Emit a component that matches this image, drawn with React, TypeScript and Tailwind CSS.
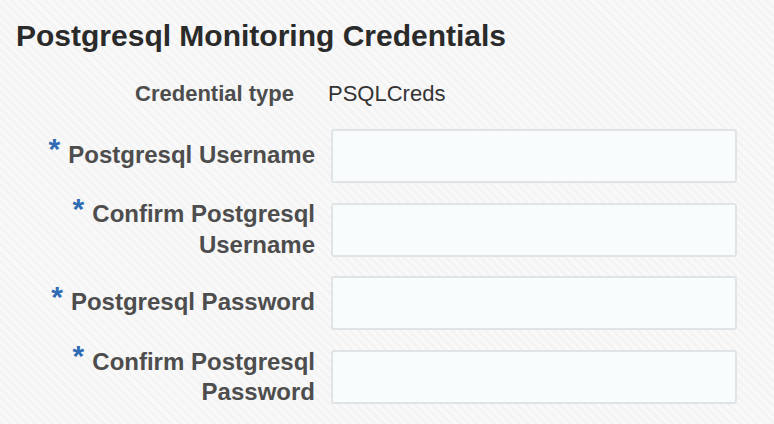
import React from "react";

const Req = () => (
  <span className="relative -top-[7px] mr-[8px] align-middle text-[30px] font-bold leading-none text-[#2f6cb5]">*</span>
);

function Row({ label, required = true }: { label: React.ReactNode; required?: boolean }) {
  return (
    <div className="flex h-[54px] items-center">
      <div className="w-[315px] pl-[20px] text-right text-[24px] font-bold leading-[28.4px] text-[#4d4d4d]">
        {required && <Req />}
        {label}
      </div>
      <div className="ml-[16px] h-[54px] w-[406px] shrink-0 rounded-[3px] border-2 border-[#e1e4e6] bg-[#f9fcfd]" />
    </div>
  );
}

export default function App() {
  return (
    <div
      className="h-[424px] w-[774px] overflow-hidden bg-[repeating-linear-gradient(45deg,#f4f4f4_0px,#f4f4f4_3px,#f9f9f9_3px,#f9f9f9_6px)] font-['Liberation_Sans',Arial,sans-serif]"
    >
      <h1 className="pl-[16px] pt-[16px] text-[30px] font-bold leading-[40px] text-[#2a2a2a]">
        Postgresql Monitoring Credentials
      </h1>
      <div className="mt-[24px] flex items-center text-[22px] leading-[28px]">
        <div className="w-[294px] text-right font-bold text-[#4d4d4d]">Credential type</div>
        <div className="ml-[34px] text-[#333333]">PSQLCreds</div>
      </div>
      <div className="mt-[21px] flex flex-col gap-[19.7px]">
        <Row label="Postgresql Username" />
        <Row label={<>Confirm Postgresql<br />Username</>} />
        <Row label="Postgresql Password" />
        <Row label={<>Confirm Postgresql<br />Password</>} />
      </div>
    </div>
  );
}
